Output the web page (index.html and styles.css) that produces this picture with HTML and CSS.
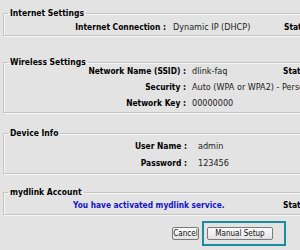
FILE: index.html
```html
<!DOCTYPE html>
<html>
<head>
<meta charset="utf-8">
<link rel="stylesheet" href="styles.css">
</head>
<body>
<div class="page">
  <fieldset class="box box-internet">
    <legend>Internet Settings</legend>
    <div class="row">
      <span class="lbl">Internet Connection&nbsp;:</span>
      <span class="val">Dynamic IP (DHCP)</span>
      <span class="stat">Status :</span>
    </div>
  </fieldset>

  <fieldset class="box box-wireless">
    <legend>Wireless Settings</legend>
    <div class="row first">
      <span class="lbl">Network Name (SSID)&nbsp;:</span>
      <span class="val">dlink-faq</span>
      <span class="stat">Status :</span>
    </div>
    <div class="row">
      <span class="lbl">Security&nbsp;:</span>
      <span class="val wide">Auto (WPA or WPA2) - Personal</span>
    </div>
    <div class="row">
      <span class="lbl">Network Key&nbsp;:</span>
      <span class="val">00000000</span>
    </div>
  </fieldset>

  <fieldset class="box box-device">
    <legend>Device Info</legend>
    <div class="row">
      <span class="lbl">User Name&nbsp;:</span>
      <span class="val">admin</span>
    </div>
    <div class="row">
      <span class="lbl">Password&nbsp;:</span>
      <span class="val">123456</span>
    </div>
  </fieldset>

  <fieldset class="box box-mydlink">
    <legend>mydlink Account</legend>
    <div class="row">
      <span class="lbl"></span>
      <span class="val activated">You have activated mydlink service.</span>
      <span class="stat">Status :</span>
    </div>
  </fieldset>

  <div class="actions">
    <button class="btn btn-cancel" type="button">Cancel</button>
    <span class="focus-ring"><button class="btn btn-manual" type="button">Manual Setup</button></span>
  </div>
</div>
</body>
</html>
```

FILE: styles.css
```css
html, body {
  margin: 0;
  padding: 0;
  overflow: hidden;
  background: #e3e3e3;
}

.page {
  width: 360px;
  height: 250px;
  padding-left: 3px;
  font-family: "DejaVu Sans Condensed", "DejaVu Sans", sans-serif;
  font-size: 9px;
  color: #111;
}

.box {
  margin: 0;
  padding: 0;
  border: 1px solid #c4c4c4;
  box-shadow: inset 1px 1px 0 #f6f6f6, 1px 1px 0 #f6f6f6;
  min-width: 0;
}

.box legend {
  font-weight: bold;
  font-size: 8.5px;
  line-height: 10px;
  padding: 0 2px;
  margin-left: 4px;
  color: #000;
}

.box-internet { margin-top: 8px; padding: 1px 0 0 0; }
.box-wireless { margin-top: 21px; padding: 0 0 1px 0; }
.box-device { margin-top: 15px; padding: 0 0 1px 0; }
.box-mydlink { margin-top: 13px; padding: 0 0 1px 0; }

.row {
  display: flex;
  height: 16px;
  line-height: 16px;
  white-space: nowrap;
}

.box-wireless .row.first { margin-top: -4px; }
.box-device .row { height: 17px; }

.lbl {
  flex: none;
  text-align: right;
  font-weight: bold;
  font-size: 8.4px;
  color: #000;
}

.val {
  flex: none;
  color: #222;
}

.stat {
  flex: none;
  font-weight: bold;
  font-size: 8.4px;
  color: #000;
}

.box-internet .lbl { width: 162px; }
.box-internet .val { width: 111px; padding-left: 7px; }

.box-wireless .lbl { width: 182px; }
.box-wireless .val { width: 91px; padding-left: 6px; }
.box-wireless .val.wide { width: auto; }

.box-device .lbl { width: 183px; }
.box-device .val { padding-left: 11px; }

.box-mydlink .lbl { width: 69px; }
.box-mydlink .val { width: 210px; }

.activated {
  font-weight: bold;
  font-size: 8.3px;
  color: #1414c8;
}

.actions {
  display: flex;
  align-items: center;
  padding-left: 169px;
  margin-top: 6px;
  gap: 3px;
}

.btn {
  font-family: "DejaVu Sans Condensed", "DejaVu Sans", sans-serif;
  font-size: 8px;
  height: 13px;
  line-height: 11px;
  padding: 0;
  color: #111;
  background: linear-gradient(#fbfbfb, #e2e2e2);
  border: 1px solid #7a7a7a;
  border-radius: 2px;
}

.btn-cancel { width: 27px; }
.btn-manual { width: 66px; }

.focus-ring {
  display: inline-flex;
  align-items: center;
  border: 2px solid #1c8ca0;
  padding: 4px 11px 4px 3px;
}
```
